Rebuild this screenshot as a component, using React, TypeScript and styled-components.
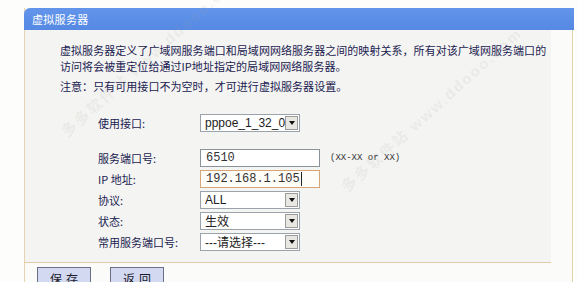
import React from 'react'
import styled, { createGlobalStyle } from 'styled-components'

const GlobalStyle = createGlobalStyle`
  html, body {
    margin: 0;
    padding: 0;
    background: #fdfdfb;
    font-family: "Noto Sans CJK SC", "Liberation Sans", sans-serif;
  }
`

const Page = styled.div`
  position: relative;
  width: 579px;
  height: 282px;
  overflow: hidden;
  padding: 8px 6px 0 24px;
  box-sizing: border-box;
`

const Panel = styled.div`
  border-left: 1px solid #e6d3b0;
  border-right: 1px solid #e6d3b0;
  height: 100%;
  background: #fbfbfa;
`

const Header = styled.div`
  height: 22px;
  display: flex;
  align-items: center;
  padding-left: 8px;
  margin-left: -1px;
  margin-right: -2px;
  background: linear-gradient(#6295ea, #5589e3);
  border-radius: 6px 0 0 0;
  color: #ffffff;
  font-size: 11px;
  letter-spacing: 0.3px;
`

const Content = styled.div`
  margin-right: 21px;
  background: #f4f4f2;
  border-bottom: 1px solid #e2c9a8;
  padding: 12px 0 10px 35px;
`

const Desc = styled.p`
  margin: 0;
  font-size: 11px;
  line-height: 16px;
  color: #1a2150;
  letter-spacing: 0.05px;
`

const Note = styled(Desc)`
  margin-top: 4px;
`

const Form = styled.div`
  display: flex;
  flex-direction: column;
  padding-left: 38px;
  margin-top: 18px;
`

const Row = styled.div<{ $gap?: number }>`
  display: flex;
  align-items: center;
  height: 21px;
  margin-top: ${(p) => p.$gap ?? 0}px;
`

const Label = styled.span`
  width: 102px;
  font-size: 11px;
  color: #1a2150;
`

const SelectBox = styled.div<{ $w: number }>`
  width: ${(p) => p.$w}px;
  height: 18px;
  box-sizing: border-box;
  border: 1px solid #9aa2ab;
  background: #ffffff;
  display: flex;
  align-items: center;
  padding-left: 4px;
  font-family: "Liberation Sans", "Noto Sans CJK SC", sans-serif;
  font-size: 12px;
  color: #222;
`

const SelectText = styled.span`
  flex: 1;
  white-space: nowrap;
  overflow: hidden;
`

const ArrowBtn = styled.span`
  flex: none;
  width: 13px;
  height: 14px;
  margin-right: 1px;
  box-sizing: border-box;
  border: 1px solid #9c9c9c;
  background: #e9e7e2;
  display: flex;
  align-items: center;
  justify-content: center;

  &::after {
    content: '';
    border-left: 3px solid transparent;
    border-right: 3px solid transparent;
    border-top: 4px solid #111;
  }
`

const TextInput = styled.div<{ $focus?: boolean }>`
  width: 120px;
  height: 18px;
  box-sizing: border-box;
  border: 1px solid ${(p) => (p.$focus ? '#d6a676' : '#8a929c')};
  background: ${(p) => (p.$focus ? '#fffdf7' : '#ffffff')};
  display: flex;
  align-items: center;
  padding-left: 5px;
  font-family: "Liberation Mono", monospace;
  font-size: 12px;
  color: #333;
`

const Caret = styled.span`
  width: 1px;
  height: 14px;
  background: #222;
  margin-left: 1px;
`

const Hint = styled.span`
  margin-left: 10px;
  font-family: "Liberation Mono", monospace;
  font-size: 9px;
  color: #333;
`

const Actions = styled.div`
  display: flex;
  gap: 19px;
  padding: 4px 0 0 12px;
`

const Button = styled.button`
  width: 54px;
  height: 20px;
  box-sizing: border-box;
  border: 1px solid #6a6f85;
  background: #d3d9f1;
  font-family: "Noto Sans CJK SC", sans-serif;
  font-size: 12px;
  line-height: 12px;
  color: #1a1a2a;
  padding: 3px 0 0;
  letter-spacing: 4px;
  text-indent: 4px;
  vertical-align: top;
`

const Watermark = styled.div<{ $x: number; $y: number }>`
  position: absolute;
  left: ${(p) => p.$x}px;
  top: ${(p) => p.$y}px;
  transform: rotate(-42deg);
  transform-origin: left bottom;
  font-family: "Liberation Sans", "Noto Sans CJK SC", sans-serif;
  font-size: 15px;
  font-weight: bold;
  color: rgba(160, 160, 160, 0.12);
  white-space: nowrap;
  pointer-events: none;
  letter-spacing: 2px;
`

const Select = ({ w, value }: { w: number; value: string }) => (
  <SelectBox $w={w}>
    <SelectText>{value}</SelectText>
    <ArrowBtn />
  </SelectBox>
)

export default function App() {
  return (
    <Page>
      <GlobalStyle />
      <Panel>
        <Header>虚拟服务器</Header>
        <Content>
          <Desc>
            虚拟服务器定义了广域网服务端口和局域网网络服务器之间的映射关系，所有对该广域网服务端口的
            <br />
            访问将会被重定位给通过IP地址指定的局域网网络服务器。
          </Desc>
          <Note>注意：只有可用接口不为空时，才可进行虚拟服务器设置。</Note>
          <Form>
            <Row>
              <Label>使用接口:</Label>
              <Select w={100} value="pppoe_1_32_0" />
            </Row>
            <Row $gap={14}>
              <Label>服务端口号:</Label>
              <TextInput>6510</TextInput>
              <Hint>(XX-XX or XX)</Hint>
            </Row>
            <Row>
              <Label>IP 地址:</Label>
              <TextInput $focus>
                192.168.1.105
                <Caret />
              </TextInput>
            </Row>
            <Row>
              <Label>协议:</Label>
              <Select w={100} value="ALL" />
            </Row>
            <Row>
              <Label>状态:</Label>
              <Select w={100} value="生效" />
            </Row>
            <Row>
              <Label>常用服务端口号:</Label>
              <Select w={100} value="---请选择---" />
            </Row>
          </Form>
        </Content>
        <Actions>
          <Button>保存</Button>
          <Button>返回</Button>
        </Actions>
      </Panel>
      <Watermark $x={70} $y={120}>多多软件站 www.ddooo.com</Watermark>
      <Watermark $x={350} $y={175}>多多软件站 www.ddooo.com</Watermark>
    </Page>
  )
}
